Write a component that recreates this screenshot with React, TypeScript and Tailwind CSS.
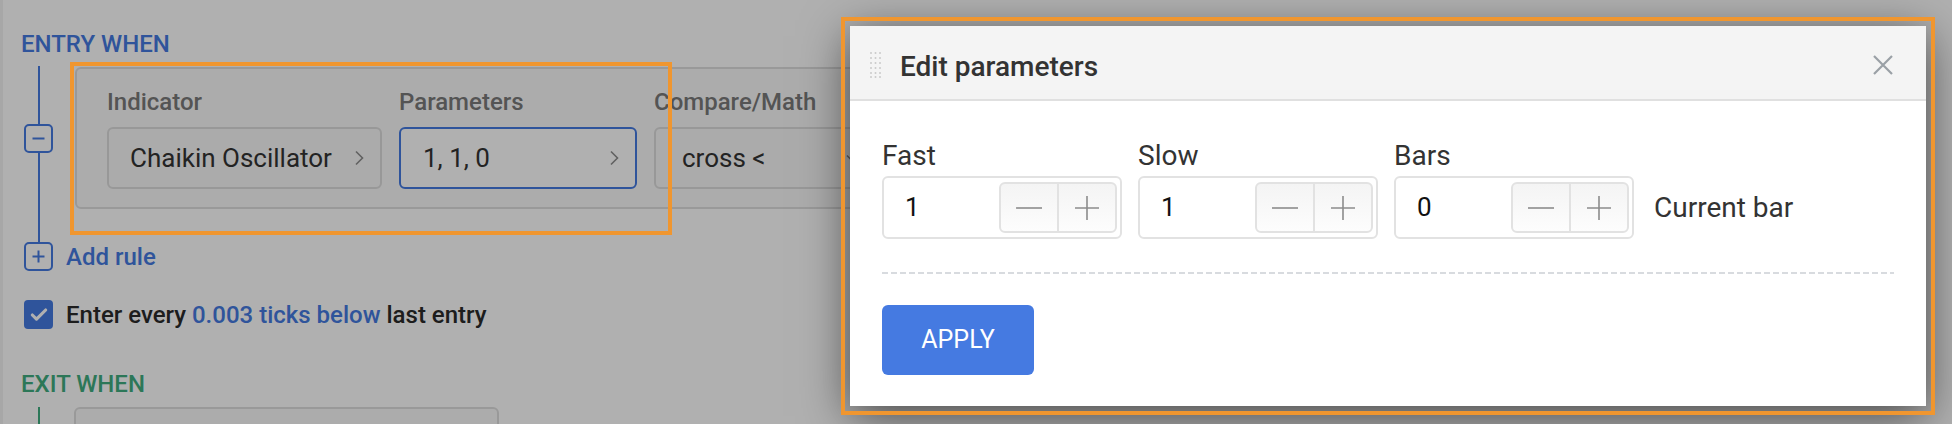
import { Check } from 'lucide-react'

const blue = 'text-[#457ae1]'

const Chevron = () => (
  <svg width="10" height="16" viewBox="0 0 10 16" fill="none" stroke="#8c8c8c" strokeWidth="1.6">
    <path d="M2 1.5 8.5 8 2 14.5" />
  </svg>
)

const RuleButton = ({ plus }: { plus?: boolean }) => (
  <div className="flex h-[29px] w-[29px] items-center justify-center rounded-[5px] border-2 border-[#457ae1] bg-white">
    <svg width="13" height="13" viewBox="0 0 13 13" stroke="#457ae1" strokeWidth="2">
      <path d="M0.5 6.5h12" />
      {plus && <path d="M6.5 0.5v12" />}
    </svg>
  </div>
)

const DragDots = () => (
  <svg width="11" height="26" viewBox="0 0 11 26" fill="#c4c4c4">
    {[1, 6, 11, 16, 21, 25].map((y) =>
      [1, 5.5, 10].map((x) => <rect key={`${x}-${y}`} x={x - 0.8} y={y - 0.8} width="1.6" height="1.6" />),
    )}
  </svg>
)

const NumberField = ({ label, value }: { label: string; value: string }) => (
  <div className="flex flex-col">
    <div className="text-[28px] leading-[32px] text-[#333]">{label}</div>
    <div className="mt-[4px] flex h-[63px] w-[240px] items-center rounded-[6px] border-2 border-[#e2e2e2] pl-[21px] pr-[3px]">
      <span className="text-[26px] text-[#111]">{value}</span>
      <div className="ml-auto flex h-[51px] w-[118px] rounded-[6px] border-2 border-[#e2e2e2] bg-linear-to-b from-[#f4f4f4] to-[#fdfdfd]">
        <div className="flex flex-1 items-center justify-center">
          <svg width="26" height="4" viewBox="0 0 26 4" stroke="#8c8c8c" strokeWidth="1.6">
            <path d="M0 2h26" />
          </svg>
        </div>
        <div className="flex flex-1 items-center justify-center border-l-2 border-[#e2e2e2]">
          <svg width="24" height="24" viewBox="0 0 24 24" stroke="#8c8c8c" strokeWidth="1.6">
            <path d="M0 12h24M12 0v24" />
          </svg>
        </div>
      </div>
    </div>
  </div>
)

const App = () => {
  return (
    <div className="relative h-[424px] w-full overflow-hidden bg-white font-['Roboto',sans-serif]">
      <div className="h-full border-l-[3px] border-[#f2f2f2] pl-[18px] pt-[30px]">
        <div className={`text-[24px] font-medium leading-[28px] ${blue}`}>ENTRY WHEN</div>

        <div className="mt-[8px] flex">
          <div className="flex w-[35px] flex-col items-center">
            <div className="h-[58px] w-[2px] bg-[#457ae1]" />
            <RuleButton />
            <div className="w-[2px] flex-1 bg-[#457ae1]" />
          </div>

          <div className="mb-[33px] ml-[19px] mt-[1px] w-[1500px] rounded-[6px] border-2 border-[#dedede] bg-[#fafafa] pb-[18px] pl-[30px] pt-[19px]">
            <div className="flex gap-[17px]">
              <div className="flex flex-col">
                <div className="text-[24px] font-medium leading-[28px] text-[#7a7a7a]">Indicator</div>
                <div className="mt-[11px] flex h-[62px] w-[275px] items-center rounded-[6px] border-2 border-[#dcdcdc] bg-[#f8f8f8] pl-[21px] pr-[16px]">
                  <span className="text-[26px] text-[#333]">Chaikin Oscillator</span>
                  <span className="ml-auto">
                    <Chevron />
                  </span>
                </div>
              </div>
              <div className="flex flex-col">
                <div className="text-[24px] font-medium leading-[28px] text-[#7a7a7a]">Parameters</div>
                <div className="mt-[11px] flex h-[62px] w-[238px] items-center rounded-[6px] border-2 border-[#457ae1] bg-white pl-[22px] pr-[16px]">
                  <span className="text-[26px] text-[#333]">1, 1, 0</span>
                  <span className="ml-auto">
                    <Chevron />
                  </span>
                </div>
              </div>
              <div className="flex flex-col">
                <div className="text-[24px] font-medium leading-[28px] text-[#7a7a7a]">Compare/Math</div>
                <div className="mt-[11px] flex h-[62px] w-[230px] items-center rounded-[6px] border-2 border-[#dcdcdc] bg-[#f8f8f8] pl-[26px] pr-[24px]">
                  <span className="text-[26px] text-[#333]">cross &lt;</span>
                  <svg className="ml-auto" width="12" height="8" viewBox="0 0 12 8" fill="none" stroke="#8c8c8c" strokeWidth="1.6">
                    <path d="M1 1.5 6 6.5 11 1.5" />
                  </svg>
                </div>
              </div>
              <div className="flex flex-col">
                <div className="text-[24px] font-medium leading-[28px] text-[#7a7a7a]">Value</div>
                <div className="mt-[11px] h-[62px] w-[238px] rounded-[6px] border-2 border-[#dcdcdc] bg-[#f8f8f8]" />
              </div>
            </div>
          </div>
        </div>

        <div className="flex h-[29px] items-center">
          <div className="flex w-[35px] justify-center">
            <RuleButton plus />
          </div>
          <span className={`ml-[10px] text-[24px] font-medium leading-[28px] ${blue}`}>Add rule</span>
        </div>

        <div className="mt-[29px] flex h-[29px] items-center">
          <div className="flex w-[35px] justify-center">
            <div className="flex h-[29px] w-[29px] items-center justify-center rounded-[4px] bg-[#457ae1]">
              <Check size={20} strokeWidth={3.8} color="white" />
            </div>
          </div>
          <span className="ml-[10px] text-[24px] font-medium leading-[28px] text-[#2a2a2a]">
            Enter every <span className={blue}>0.003 ticks below</span> last entry
          </span>
        </div>

        <div className="mt-[41px] text-[24px] font-medium leading-[28px] text-[#41ad80]">EXIT WHEN</div>
        <div className="mt-[9px] flex">
          <div className="flex w-[35px] justify-center">
            <div className="h-[60px] w-[2px] bg-[#41ad80]" />
          </div>
          <div className="ml-[18px] h-[60px] w-[425px] rounded-[6px] border-2 border-[#dedede] bg-[#fafafa]" />
        </div>
      </div>

      <div className="absolute inset-0 bg-black/[0.31]" />

      <div className="pointer-events-none absolute left-[70px] top-[62px] h-[173px] w-[602px] border-4 border-[#f0962f]" />

      <div className="absolute left-[850px] top-[26px] flex h-[380px] w-[1076px] flex-col bg-white shadow-[0_10px_45px_rgba(0,0,0,0.6)] outline-4 outline-offset-[5px] outline-[#f0962f]">
        <div className="flex h-[75px] shrink-0 items-center border-b-2 border-[#e0e0e0] bg-[#f4f4f4] pl-[20px] pr-[33px] pt-[5px]">
          <DragDots />
          <span className="ml-[19px] mt-[3px] text-[28px] font-medium leading-[32px] text-[#333]">Edit parameters</span>
          <svg className="ml-auto" width="20" height="20" viewBox="0 0 20 20" stroke="#9aa0a6" strokeWidth="2.2">
            <path d="M1 1l18 18M19 1 1 19" />
          </svg>
        </div>

        <div className="flex flex-col px-[32px] pt-[39px]">
          <div className="flex items-end gap-[16px]">
            <NumberField label="Fast" value="1" />
            <NumberField label="Slow" value="1" />
            <NumberField label="Bars" value="0" />
            <div className="ml-[4px] flex h-[63px] items-center text-[28px] text-[#333]">Current bar</div>
          </div>

          <div className="mt-[33px] h-[2px] bg-[linear-gradient(to_right,#d8dbdf_6px,transparent_6px)] bg-[length:9px_2px]" />

          <button className="mt-[31px] h-[70px] w-[152px] rounded-[6px] bg-[#457ae1] text-[25px] text-white">
            APPLY
          </button>
        </div>
      </div>
    </div>
  )
}

export default App
